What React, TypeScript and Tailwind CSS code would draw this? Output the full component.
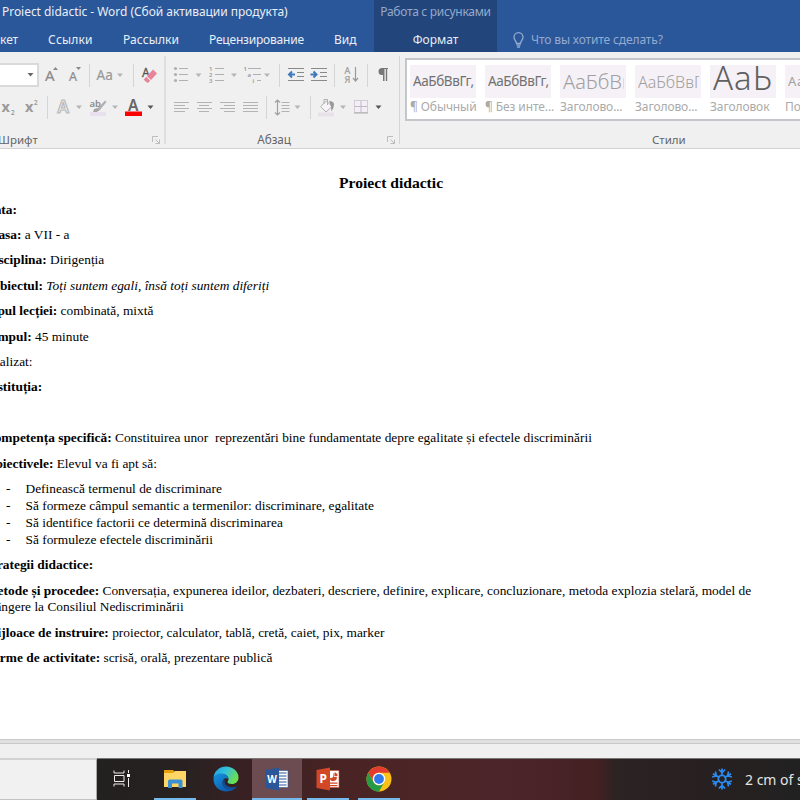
import React from "react";

const ui = "font-['Noto_Sans','Open_Sans',sans-serif]";

const styles = [
  { id: 1, sample: "АаБбВвГг,", name: "¶ Обычный", className: "text-[13.500px] tracking-[-0.4px] text-[#707070]" },
  { id: 2, sample: "АаБбВвГг,", name: "¶ Без инте...", className: "text-[13.500px] tracking-[-0.4px] text-[#707070]" },
  { id: 3, sample: "АаБбВв", name: "Заголово...", className: "text-[20px] font-light text-[#a0a0a0]" },
  { id: 4, sample: "АаБбВвГ", name: "Заголово...", className: "text-[16px] font-light text-[#a0a0a0]" },
  { id: 5, sample: "АаЬ", name: "Заголовок", className: "pb-[7px] text-[33px] tracking-[1px] font-light text-[#606060]" },
  { id: 6, sample: "АаБбВвГг", name: "Подзаго...", className: "text-[13px] tracking-[0.7px] text-[#a0a0a0]" },
];

const goals = [
  "Definească termenul de discriminare",
  "Să formeze câmpul semantic a termenilor: discriminare, egalitate",
  "Să identifice factorii ce determină discriminarea",
  "Să formuleze efectele discriminării",
];

// One slot of a ribbon row; drawings use the ribbon's own x axis
const Slot = ({ x, w, children }: { x: number; w: number; children?: React.ReactNode }) => (
  <svg width={w} height={32} viewBox={`${x} 0 ${w} 32`} className="shrink-0" fill="none">
    {children}
  </svg>
);

const Arrow = ({ x, color = "#b5b5b5" }: { x: number; color?: string }) => (
  <path d={`M${x} 14.5h6l-3 3.5z`} fill={color} />
);

const Divider = () => <div className="h-[23px] w-px shrink-0 bg-[#d5d5d5]" />;

const Launcher = () => (
  <svg width="9" height="9" viewBox="0 0 9 9" fill="none" stroke="#bdbdbd">
    <path d="M.5 6V.5H6M3.500 3.500l4 4M7.500 3.500v4h-4" />
  </svg>
);

const FontGroup = () => (
  <section className="flex w-[164px] shrink-0 flex-col pt-[7px]">
    <div className="flex h-8 items-center">
      <div className="flex h-[24px] w-[39px] items-center justify-end border-2 border-l-0 border-[#dadada] bg-white pr-[3px]">
        <svg width="7" height="4" viewBox="0 0 7 4">
          <path d="M.5 0h6l-3 3.5z" fill="#666" />
        </svg>
      </div>
      <Slot x={39} w={50}>
        <text x="45" y="22" fontSize="15" fill="#8a8a8a" stroke="#8a8a8a" strokeWidth=".2">A</text>
        <path d="M53 11l2.500-3 2.500 3z" fill="#888" />
        <text x="69" y="22" fontSize="12.500" fill="#8a8a8a" stroke="#8a8a8a" strokeWidth=".2">A</text>
        <path d="M76 8h5l-2.500 3z" fill="#888" />
      </Slot>
      <Divider />
      <Slot x={90} w={43}>
        <text x="96.500" y="21" fontSize="13.500" fill="#999" stroke="#999" strokeWidth=".2">Aa</text>
        <Arrow x={117} />
      </Slot>
      <Divider />
      <Slot x={134} w={30}>
        <text x="142" y="17.500" fontSize="12" fill="#555" stroke="#555" strokeWidth=".3">A</text>
        <path d="M147 17l6-6.500 4 4-6 6.500z" fill="#e8839a" />
        <path d="M146.200 17.800l4 4-2 2h-1l-3.500-3z" fill="#e8839a" />
      </Slot>
    </div>
    <div className="flex h-8 items-center">
      <Slot x={0} w={47}>
        <text x="1.500" y="21" fontSize="14.500" fontWeight="700" fill="#9a9a9a">x</text>
        <text x="11" y="23.500" fontSize="6.500" fontWeight="600" fill="#999">2</text>
        <text x="25" y="21" fontSize="14.500" fontWeight="700" fill="#9a9a9a">x</text>
        <text x="34" y="14" fontSize="6.500" fontWeight="600" fill="#999">2</text>
      </Slot>
      <Divider />
      <Slot x={48} w={116}>
        <text x="57.500" y="22" fontSize="17" fontWeight="600" fill="#f0f0f0" stroke="#b9b9b9" strokeWidth="1.200">A</text>
        <Arrow x={76} />
        <text x="89.500" y="15.500" fontSize="9.500" fontWeight="600" fill="#8a8a8a">ab</text>
        <path d="M105 9.500l-7.500 8-1.500 3.500 3.500-1.500 7-8.500z" fill="#b0b0b0" />
        <path d="M94 18l4-1 1 2-3 2.500h-3z" fill="#a5a5a5" />
        <path d="M90 21h16v4H90z" fill="#e8e0ee" />
        <Arrow x={112} />
        <text x="128" y="20" fontSize="15.500" fontWeight="600" fill="#666">A</text>
        <path d="M125 20.500h17v4.500h-17z" fill="#f00" />
        <Arrow x={147.5} color="#555" />
      </Slot>
    </div>
    <div className="mt-[9px] flex h-4 items-center justify-between pr-[3px]">
      <span className="-ml-[2px] text-[11.500px] text-[#666]">Шрифт</span>
      <Launcher />
    </div>
  </section>
);

const ParagraphGroup = () => (
  <section className="flex w-[233px] shrink-0 flex-col pt-[7px]">
    <div className="flex h-8 items-center">
      <Slot x={166} w={113}>
        {[9.5, 15.5, 21.5].map((y, i) => (
          <g key={y}>
            <circle cx="175.500" cy={y} r="1.600" fill="#b0b0b0" />
            <path d={`M179 ${y}h9M215 ${y}h9`} stroke="#b0b0b0" />
            <text x="209" y={y + 2.3} fontSize="6" fontWeight="600" fill="#999">{i + 1}</text>
          </g>
        ))}
        <Arrow x={195.5} />
        <Arrow x={231} />
        <g fontSize="6" fontWeight="600" fill="#999">
          <text x="243.500" y="11.500">1</text>
          <text x="247.500" y="17.500">a</text>
          <text x="252.500" y="24">i</text>
        </g>
        <path d="M248 9.500h13M253 15.500h8M257 21.500h4" stroke="#b0b0b0" />
        <Arrow x={264} />
      </Slot>
      <Divider />
      <Slot x={280} w={54}>
        <path d="M288 9.500h16M297 13.500h7M297 17.500h7M288 21.500h16M311 9.500h16M320 13.500h7M320 17.500h7M311 21.500h16" stroke="#8a8a8a" strokeWidth="1.200" />
        <path d="M295 15.500h-6m3-3l-3 3 3 3M310.500 15.500h6m-3-3l3 3-3 3" stroke="#3f79b9" strokeWidth="2" />
      </Slot>
      <Divider />
      <Slot x={335} w={32}>
        <text x="344.500" y="15" fontSize="9" fill="#999" stroke="#999" strokeWidth=".2">А</text>
        <text x="344.500" y="23.500" fontSize="9" fill="#999" stroke="#999" strokeWidth=".2">Я</text>
        <path d="M355.500 8v14m-2.500-3l2.500 3 2.500-3" stroke="#999" strokeWidth="1.200" />
      </Slot>
      <Divider />
      <Slot x={368} w={31}>
        <path d="M388 9h-6a3.500 3.500 0 000 7h1v6h1.500V10h1.300v12h1.400V10h.8z" fill="#777" />
      </Slot>
    </div>
    <div className="flex h-8 items-center">
      <Slot x={166} w={100}>
        <path
          d="M174 11.500h15M174 14.500h11M174 17.500h15M174 20.500h11M197 11.500h15M199 14.500h10M197 17.500h15M199 20.500h10M220 11.500h15M224 14.500h11M220 17.500h15M224 20.500h11M243 11.500h15M243 14.500h15M243 17.500h15M243 20.500h15"
          stroke="#b3b3b3"
        />
      </Slot>
      <Divider />
      <Slot x={267} w={43}>
        <path d="M277.500 9v15m-2.500-12.500l2.500-2.500 2.500 2.500M275 21.500l2.500 2.500 2.500-2.500" stroke="#a0a0a0" strokeWidth="1.200" />
        <path d="M281.500 11.500h8M281.500 14.500h8M281.500 17.500h8M281.500 20.500h8" stroke="#b3b3b3" />
        <Arrow x={294.5} />
      </Slot>
      <Divider />
      <Slot x={311} w={88}>
        <path d="M320.500 15.500l6-5.500 5.500 5.500-6 5.500z" stroke="#b0b0b0" fill="#f7f3f9" />
        <path d="M324 13V8.500h3.500V14" stroke="#b0b0b0" />
        <path d="M329 10q5 0 5 3.500t-2.500 7q0-6-2.500-10.500z" fill="#999" />
        <path d="M318 21.500h16v4h-16z" fill="#e9e1e9" />
        <Arrow x={340} />
        <path d="M354.500 9.500h13v12h-13z" fill="#f4eef7" stroke="#b5a9b5" strokeDasharray="1 1" />
        <path d="M361 10v11M355 15.500h12" stroke="#c2b8c2" />
        <path d="M354 22h14" stroke="#aaa" />
        <Arrow x={375.5} color="#555" />
      </Slot>
    </div>
    <div className="mt-[9px] flex h-4 items-center justify-end pr-[3px]">
      <span className="mr-[96px] text-[11.700px] text-[#666]">Абзац</span>
      <Launcher />
    </div>
  </section>
);

const StylesGroup = () => (
  <section className="flex min-w-0 flex-1 flex-col pl-[5px] pt-[6px]">
    <div className="flex h-[63px] gap-[9px] overflow-hidden border-2 border-r-0 border-[#c3c7cb] bg-white pl-[3px] pt-[5px]">
      {styles.map((s) => (
        <div key={s.id} className="w-[66px] shrink-0">
          <div className="h-[33px] bg-[#f5f1f7] pl-[3px] pr-[2px]">
            <div className={`flex h-[33px] items-center overflow-hidden whitespace-nowrap ${s.className}`}>{s.sample}</div>
          </div>
          <div className="flex h-[18px] items-center whitespace-nowrap text-[12px] tracking-[-0.1px] text-[#aaa]">{s.name}</div>
        </div>
      ))}
    </div>
    <div className="mt-[11px] flex h-4 items-center pl-[247px] text-[11.500px] text-[#666]">Стили</div>
  </section>
);

const Para = ({ label, children }: { label?: string; children?: React.ReactNode }) => (
  <p className="mb-[8.500px] whitespace-pre">
    {label && <b>{label} </b>}
    {children}
  </p>
);

const Document = () => (
  <main className="h-[590px] shrink-0 overflow-hidden bg-white pt-[25px] font-['Liberation_Serif',serif] text-[13.380px] leading-[16.900px] text-black">
    <h1 className="mb-[10.500px] pl-[339px] text-[15.600px] font-bold leading-[17px]">Proiect didactic</h1>
    <div className="-ml-[15px]">
      <Para label="Data:" />
      <Para label="Clasa:">a VII - a</Para>
      <Para label="Disciplina:">Dirigenția</Para>
      <Para label="Subiectul:"><i>Toți suntem egali, însă toți suntem diferiți</i></Para>
      <Para label="Tipul lecției:">combinată, mixtă</Para>
      <Para label="Timpul:">45 minute</Para>
      <Para>Realizat:</Para>
      <Para label="Instituția:" />
      <Para> </Para>
      <Para label="Competența specifică:">Constituirea unor  reprezentări bine fundamentate depre egalitate și efectele discriminării</Para>
      <Para label="Obiectivele:">Elevul va fi apt să:</Para>
      <ul className="mb-[8.500px]">
        {goals.map((goal) => (
          <li key={goal} className="flex">
            <span className="w-[40.500px] pl-[21px]">-</span>
            {goal}
          </li>
        ))}
      </ul>
      <Para label="Strategii didactice:" />
      <Para label="Metode și procedee:">
        Conversația, expunerea ideilor, dezbateri, descriere, definire, explicare, concluzionare, metoda explozia stelară, model de{"\n"}
        plângere la Consiliul Nediscriminării
      </Para>
      <Para label="Mijloace de instruire:">proiector, calculator, tablă, cretă, caiet, pix, marker</Para>
      <Para label="Forme de activitate:">scrisă, orală, prezentare publică</Para>
    </div>
  </main>
);

const TaskView = () => (
  <svg width="18" height="17" viewBox="0 0 18 17" fill="none" stroke="#eee">
    <path d="M1 .5v2.500h10V.5M1.500 5.500h9.500v6H1.500zM1 16.500V14h10v2.500M15.500 0v3M15.500 8v9" />
    <path d="M14 4h3v3h-3z" fill="#fff" stroke="none" />
  </svg>
);

const Folder = () => (
  <svg width="24" height="20" viewBox="0 0 24 20">
    <path d="M1 1h9l2 2h11v15H1z" fill="#e6a208" />
    <path d="M1 4h9l2-2h11v16H1z" fill="#ffd666" />
    <path d="M5 19v-7.500l1.500-1h11.500l1.500 1V19h-4v-4.500H9V19z" fill="#3a92d4" />
  </svg>
);

const Edge = () => (
  <svg width="26" height="26" viewBox="0 0 26 26">
    <defs>
      <linearGradient id="edgeTop" x1="0" y1="0" x2="1" y2=".5">
        <stop offset="0" stopColor="#1b9de2" />
        <stop offset=".5" stopColor="#35c1d8" />
        <stop offset="1" stopColor="#6be04f" />
      </linearGradient>
      <linearGradient id="edgeLow" x1="0" y1="0" x2="1" y2="1">
        <stop offset="0" stopColor="#1593e0" />
        <stop offset="1" stopColor="#0b4a9c" />
      </linearGradient>
    </defs>
    <path d="M.5 12C1 5 6.500.5 13 .5c7 0 12.500 5 12.500 11 0 4-3 6.500-6.500 6.500-3 0-4.500-1-4.500-2 0-.8 1-1.200 1-3C15.500 10.500 13 8 9 8 5 8 1.500 10 .5 12z" fill="url(#edgeTop)" />
    <path d="M.5 13C1 9.500 4.500 7.500 8.500 7.500c4.500 0 7 2.800 7 5.500-3-2-6 .5-6 4 0 4 4.500 6.500 8 6 3-.3 5-1.500 6.500-2.700C22 23.500 18 25.500 13.500 25.500 6 25.500.5 20 .5 13z" fill="url(#edgeLow)" />
    <path d="M9.500 15c-1 6 4 9 8.500 8.500 2.500-.3 4.500-1.700 6-3.200-4 1.700-9 1.200-11.500-1.800-1-1.200-1-3-.5-4.500z" fill="#114f9a" />
  </svg>
);

const Office = ({ letter }: { letter: "W" | "P" }) => (
  <svg width="24" height="24" viewBox="0 0 24 24">
    <path d="M12 3.500h11v17H12z" fill="#fff" stroke={letter === "W" ? "#2b579a" : "#d24726"} strokeWidth=".6" />
    {letter === "W" ? (
      <path d="M14 6h7.500M14 9h7.500M14 12h7.500M14 15h7.500M14 18h7.500" stroke="#2b579a" strokeWidth="1.100" />
    ) : (
      <>
        <path d="M17 6.500a3.800 3.800 0 11-3.500 5l3.500-1.200z" fill="#d24726" />
        <path d="M18 5v4.500h4A4 4 0 0018 5z" fill="#d24726" stroke="#fff" strokeWidth=".8" />
        <path d="M14 15.500h7.500v1.200H14zM14 18h7.500v1.200H14z" fill="#d24726" />
      </>
    )}
    <path d="M.5 3L14 .5v23L.5 21z" fill={letter === "W" ? "#2b579a" : "#d24726"} />
    <text x={letter === "W" ? 2.2 : 3.5} y="16" fontSize={letter === "W" ? 10 : 12} fontWeight="700" fill="#fff">
      {letter}
    </text>
  </svg>
);

const Chrome = () => (
  <svg width="26" height="26" viewBox="0 0 26 26">
    <circle cx="13" cy="13" r="12.500" fill="#fbc116" />
    <path d="M2.200 6.700A12.500 12.500 0 0123.800 6.700H13a6.300 6.300 0 00-5.500 9.400z" fill="#e33b2e" />
    <path d="M2.200 6.700A12.500 12.500 0 0013 25.500l5.400-9.400a6.300 6.300 0 01-10.900 0z" fill="#269a45" />
    <circle cx="13" cy="13" r="6.200" fill="#fff" />
    <circle cx="13" cy="13" r="4.900" fill="#3178ec" />
  </svg>
);

const Snowflake = () => (
  <svg width="22" height="22" viewBox="-11 -11 22 22" fill="none" stroke="#2b8af0" strokeWidth="1.700">
    {[0, 60, 120, 180, 240, 300].map((a) => (
      <path key={a} transform={`rotate(${a})`} d="M0-3.500V-10.500M-3.200-9.500L0-6.500l3.200-3M-2-3.500h4" />
    ))}
  </svg>
);

const apps = [
  { id: "view", icon: <TaskView />, box: "w-[50px]", line: "" },
  { id: "files", icon: <Folder />, box: "w-[42px] ml-[7px]", line: "bg-[#76b9ed]" },
  { id: "edge", icon: <Edge />, box: "w-[50px] ml-[5px]", line: "" },
  { id: "word", icon: <Office letter="W" />, box: "w-[50px] ml-px bg-[#6c4b51]", line: "bg-[#76b9ed]" },
  { id: "ppt", icon: <Office letter="P" />, box: "w-[42px] ml-[5px]", line: "bg-[#76b9ed]" },
  { id: "chrome", icon: <Chrome />, box: "w-[42px] ml-[9px]", line: "bg-[#76b9ed]" },
];

const App = () => {
  return (
    <div className={`flex h-[800px] w-[800px] flex-col overflow-hidden bg-[#f0f0f0] ${ui}`}>
      <header className="flex h-[52px] shrink-0 bg-[#2a579a] text-[12px] text-[#e9eef6]">
        <div className="flex w-[374px] flex-col overflow-hidden whitespace-nowrap">
          <div className="flex h-6 items-center pl-[2px] tracking-[-0.04px]">Proiect didactic - Word (Сбой активации продукта)</div>
          <nav className="flex h-7 items-center pt-[3px]">
            <span className="w-[48px]">кет</span>
            <span className="w-[75px] tracking-[0.2px]">Ссылки</span>
            <span className="w-[86px] tracking-[0.1px]">Рассылки</span>
            <span className="w-[125px] tracking-[-0.2px]">Рецензирование</span>
            <span>Вид</span>
          </nav>
        </div>
        <div className="flex w-[123px] flex-col items-center bg-[#22457b]">
          <div className="flex h-6 items-center whitespace-nowrap tracking-[-0.3px] text-[#94a9cb]">Работа с рисунками</div>
          <div className="flex h-7 items-center pt-[3px]">Формат</div>
        </div>
        <div className="flex items-end pl-[16px]">
          <div className="flex h-7 items-center gap-[7px] pt-[3px] tracking-[-0.13px] text-[#94abd0]">
            <svg width="11" height="16" viewBox="0 0 11 16" fill="none" stroke="#94abd0" strokeWidth="1.300">
              <path d="M3.500 11.500C3.500 9 1 8 1 5.200a4.500 4.500 0 019 0C10 8 7.500 9 7.500 11.500zM3.500 13.200h4M4 15h3" />
            </svg>
            Что вы хотите сделать?
          </div>
        </div>
      </header>

      <div className="flex h-[97px] shrink-0 border-b border-[#d2d2d2]">
        <FontGroup />
        <div className="mt-1 h-[88px] w-[2px] shrink-0 bg-[#dedede]" />
        <ParagraphGroup />
        <div className="mt-1 h-[88px] w-px shrink-0 bg-[#d5d5d5]" />
        <StylesGroup />
      </div>

      <Document />

      <div className="h-[5px] shrink-0 border-y border-[#cacaca] bg-[#e0e0e0]" />
      <div className="h-[14px] shrink-0 bg-[#f0f0f0]" />

      <footer className="flex h-[42px] shrink-0">
        <div className="w-[97px] shrink-0 border-b border-r border-t-2 border-b-[#c4c4c4] border-r-[#aaa] border-t-[#d2d2d2] bg-[#f1f1f1]" />
        <div className="flex flex-1 overflow-hidden border-t border-[#777] bg-[linear-gradient(90deg,#222020_0,#292121_90px,#3a2023_155px,#4a2424_250px,#4c2627_340px,#4b242a_430px,#432022_500px,#2c2323_520px,#272020_620px,#212121_703px)]">
          {apps.map((app) => (
            <div key={app.id} className={`flex shrink-0 flex-col items-center ${app.box}`}>
              <div className="flex h-[39px] items-center">{app.icon}</div>
              <div className={`h-[2px] w-full ${app.line}`} />
            </div>
          ))}
          <div className="ml-[311px] flex items-center gap-[12px] whitespace-nowrap pb-px text-[14px] text-[#e4e4e4]">
            <Snowflake />
            2 cm of snow
          </div>
        </div>
      </footer>
    </div>
  );
};

export default App;
